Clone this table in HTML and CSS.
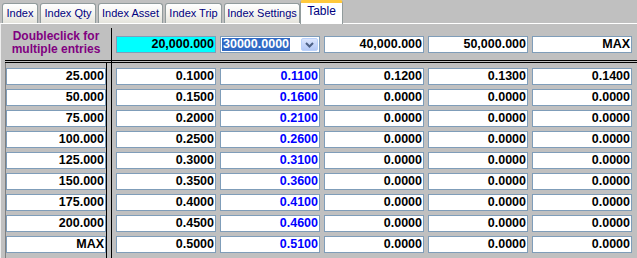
FILE: index.html
```html
<!DOCTYPE html>
<html>
<head>
<meta charset="utf-8">
<link rel="stylesheet" href="styles.css">
</head>
<body>
<div class="tabs">
  <div class="tab w1">Index</div>
  <div class="tab w2">Index Qty</div>
  <div class="tab w3">Index Asset</div>
  <div class="tab w4">Index Trip</div>
  <div class="tab w5">Index Settings</div>
  <div class="tab active w6">Table</div>
</div>
<div class="panel">
  <div class="label">Doubleclick for<br>multiple entries</div>
  <div class="vline"></div>
  <div class="head">
    <div class="cell cyan">20,000.000</div>
    <div class="cell combo"><span class="sel">30000.0000</span><span class="drop"><svg width="9" height="6" viewBox="0 0 9 6"><path d="M1 1 L4.5 4.5 L8 1" fill="none" stroke="#4d6185" stroke-width="2"/></svg></span></div>
    <div class="cell">40,000.000</div>
    <div class="cell">50,000.000</div>
    <div class="cell">MAX</div>
  </div>
  <div class="rule"></div>
  <div class="leftbox">
    <div class="cell">25.000</div>
    <div class="cell">50.000</div>
    <div class="cell">75.000</div>
    <div class="cell">100.000</div>
    <div class="cell">125.000</div>
    <div class="cell">150.000</div>
    <div class="cell">175.000</div>
    <div class="cell">200.000</div>
    <div class="cell">MAX</div>
  </div>
  <div class="grid">
    <div class="cell">0.1000</div><div class="cell blue">0.1100</div><div class="cell">0.1200</div><div class="cell">0.1300</div><div class="cell">0.1400</div>
    <div class="cell">0.1500</div><div class="cell blue">0.1600</div><div class="cell">0.0000</div><div class="cell">0.0000</div><div class="cell">0.0000</div>
    <div class="cell">0.2000</div><div class="cell blue">0.2100</div><div class="cell">0.0000</div><div class="cell">0.0000</div><div class="cell">0.0000</div>
    <div class="cell">0.2500</div><div class="cell blue">0.2600</div><div class="cell">0.0000</div><div class="cell">0.0000</div><div class="cell">0.0000</div>
    <div class="cell">0.3000</div><div class="cell blue">0.3100</div><div class="cell">0.0000</div><div class="cell">0.0000</div><div class="cell">0.0000</div>
    <div class="cell">0.3500</div><div class="cell blue">0.3600</div><div class="cell">0.0000</div><div class="cell">0.0000</div><div class="cell">0.0000</div>
    <div class="cell">0.4000</div><div class="cell blue">0.4100</div><div class="cell">0.0000</div><div class="cell">0.0000</div><div class="cell">0.0000</div>
    <div class="cell">0.4500</div><div class="cell blue">0.4600</div><div class="cell">0.0000</div><div class="cell">0.0000</div><div class="cell">0.0000</div>
    <div class="cell">0.5000</div><div class="cell blue">0.5100</div><div class="cell">0.0000</div><div class="cell">0.0000</div><div class="cell">0.0000</div>
  </div>
</div>
</body>
</html>
```

FILE: styles.css
```css
html, body {
  margin: 0;
  padding: 0;
}
body {
  width: 637px;
  height: 258px;
  overflow: hidden;
  background: #c0c0c0;
  font-family: "Liberation Sans", Arial, sans-serif;
}
.tabs {
  display: flex;
  align-items: flex-end;
  height: 23px;
  padding-left: 2px;
  position: relative;
  z-index: 1;
}
.tab {
  box-sizing: border-box;
  height: 20px;
  margin-right: 2px;
  border: 1px solid #919b9c;
  border-bottom: none;
  border-radius: 3px 3px 0 0;
  background: linear-gradient(#ffffff, #f4f3ee 55%, #e4e3dc);
  color: #000080;
  font-size: 11px;
  line-height: 18px;
  text-align: center;
  white-space: nowrap;
}
.w1 { width: 36px; }
.w2 { width: 56px; }
.w3 { width: 65px; }
.w4 { width: 57px; }
.w5 { width: 76px; }
.w6 { width: 43px; }
.tab.active {
  height: 24px;
  margin-bottom: -1px;
  margin-left: -2px;
  border-top: 3px solid #ffc83c;
  box-shadow: inset 0 0 0 0 #fff;
  background: #fff;
  line-height: 16px;
  font-size: 12px;
}
.panel {
  box-sizing: border-box;
  height: 235px;
  display: grid;
  grid-template-columns: 110px 1px 1fr;
  grid-template-rows: 36px 3px auto;
  border-top: 1px solid #ffffff;
  border-left: 1px solid #eeeeee;
}
.label {
  grid-column: 1;
  grid-row: 1;
  padding-top: 6px;
  text-align: center;
  color: #800080;
  font-weight: bold;
  font-size: 12px;
  line-height: 13px;
}
.vline {
  grid-column: 2;
  grid-row: 1 / 4;
  margin-top: 4px;
  background: #000;
}
.head {
  grid-column: 3;
  grid-row: 1;
  display: flex;
  gap: 4px;
  padding: 12px 0 0 4px;
}
.rule {
  grid-column: 1 / 4;
  grid-row: 2;
  margin-left: 4px;
  border-top: 1px solid #000;
  border-bottom: 1px solid #000;
}
.leftbox {
  grid-column: 1;
  grid-row: 3;
  margin-left: 4px;
  width: 100px;
  border-left: 1px solid #808080;
  border-right: 1px solid #000;
  padding-top: 5px;
  display: flex;
  flex-direction: column;
  gap: 4px;
}
.grid {
  grid-column: 3;
  grid-row: 3;
  padding: 5px 0 0 4px;
  display: grid;
  grid-template-columns: repeat(5, 100px);
  grid-auto-rows: 17px;
  gap: 4px;
  align-content: start;
}
.cell {
  box-sizing: border-box;
  width: 100px;
  height: 17px;
  border: 1px solid #7f9db9;
  background: #fff;
  text-align: right;
  padding-right: 1px;
  font-weight: bold;
  font-size: 12.5px;
  line-height: 15px;
  color: #000;
  white-space: nowrap;
}
.cyan {
  background: #00ffff;
}
.blue {
  color: #0000ff;
}
.combo {
  display: flex;
  align-items: center;
  justify-content: space-between;
  padding: 1px;
  text-align: left;
}
.sel {
  background: #316ac5;
  color: #fff;
  line-height: 13px;
  padding: 0 1px;
}
.drop {
  box-sizing: border-box;
  width: 17px;
  height: 13px;
  border: 1px solid #b9d1fa;
  border-radius: 2px;
  background: linear-gradient(#dce6fd, #c6d6fb 50%, #b4c9f6);
  display: flex;
  align-items: center;
  justify-content: center;
}
```
